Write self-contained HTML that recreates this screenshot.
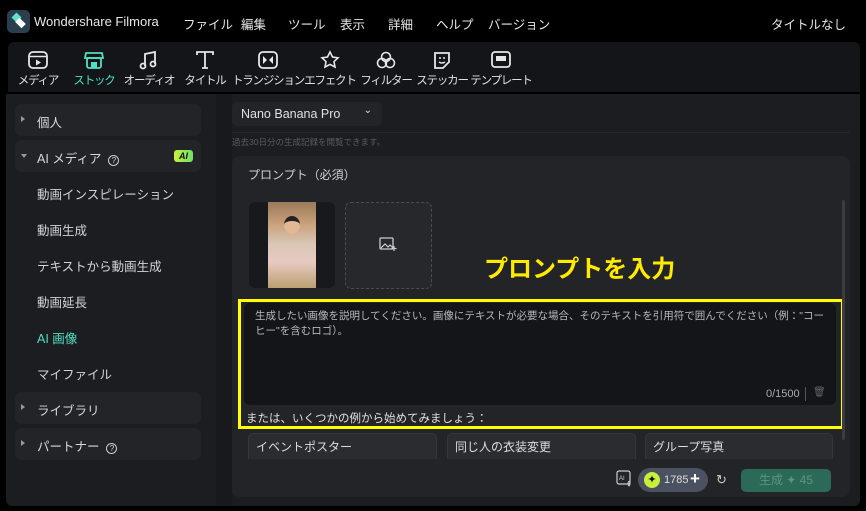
<!DOCTYPE html>
<html><head><meta charset="utf-8"><style>
*{box-sizing:border-box;margin:0;padding:0}
body{width:866px;height:511px;background:#000;font-family:"Liberation Sans","Noto Sans CJK JP",sans-serif;color:#d8d9db;position:relative;overflow:hidden;font-size:12px}
.a{position:absolute;white-space:nowrap}
.menu{top:14px;font-size:12.5px;color:#e6e6e6}
.tb{position:absolute;left:8px;top:42px;width:852px;height:50px;background:#141518;border-radius:6px 6px 0 0}
.ti{position:absolute;top:50px;width:80px;text-align:center;font-size:11.5px;letter-spacing:-1.2px;color:#e0e0e0;white-space:nowrap}
.ti svg{display:block;margin:0 auto 2px}
.panel{position:absolute;left:6px;top:94px;width:854px;height:412px;background:#1b1d21;border-radius:0 0 6px 6px}
.row{position:absolute;left:15px;width:186px;height:32px;background:#222428;border-radius:6px}
.sub{left:37px;font-size:12.5px;color:#d3d4d6}
.tri{position:absolute;left:6px;top:12px;width:0;height:0;border-left:4px solid #999;border-top:3.5px solid transparent;border-bottom:3.5px solid transparent}
</style></head><body>
<div class="a" style="left:7px;top:10px;width:23px;height:23px;background:#2b3e4e;border-radius:5px"></div>
<div class="a" style="left:13px;top:14px;width:7px;height:7px;background:#5fe3d0;transform:rotate(45deg)"></div>
<div class="a" style="left:16px;top:20px;width:9px;height:6px;background:#fff;transform:rotate(45deg)"></div>
<div class="a" style="left:34px;top:14px;font-size:13px;color:#e8e8e8">Wondershare Filmora</div>
<div class="a menu" style="left:183px">ファイル</div>
<div class="a menu" style="left:241px">編集</div>
<div class="a menu" style="left:288px">ツール</div>
<div class="a menu" style="left:340px">表示</div>
<div class="a menu" style="left:388px">詳細</div>
<div class="a menu" style="left:436px">ヘルプ</div>
<div class="a menu" style="left:488px">バージョン</div>
<div class="a menu" style="left:771px">タイトルなし</div>
<div class="tb"></div>
<div class="ti" style="left:-2px"><svg width="22" height="20" viewBox="0 0 22 20"><rect x="2" y="2" width="18" height="16" rx="4" fill="none" stroke="#e6e6e6" stroke-width="1.8"/><line x1="2" y1="6.5" x2="20" y2="6.5" stroke="#e6e6e6" stroke-width="1.5"/><path d="M9 9.5l5 3-5 3z" fill="#e6e6e6"/></svg>メディア</div>
<div class="ti" style="left:54px;color:#4fe0c0"><svg width="22" height="20" viewBox="0 0 22 20"><path d="M3 3h16l1 5H2z" fill="none" stroke="#4fe0c0" stroke-width="1.8"/><rect x="4" y="8" width="14" height="10" rx="2" fill="none" stroke="#4fe0c0" stroke-width="1.8"/><rect x="8" y="12" width="6" height="6" fill="#4fe0c0"/></svg>ストック</div>
<div class="ti" style="left:109px"><svg width="22" height="20" viewBox="0 0 22 20"><path d="M7 16V4l10-2v12" fill="none" stroke="#e6e6e6" stroke-width="1.8"/><circle cx="5" cy="16" r="2.5" fill="none" stroke="#e6e6e6" stroke-width="1.8"/><circle cx="15" cy="14" r="2.5" fill="none" stroke="#e6e6e6" stroke-width="1.8"/></svg>オーディオ</div>
<div class="ti" style="left:165px"><svg width="22" height="20" viewBox="0 0 22 20"><path d="M3 5V2h16v3M11 2v16M8 18h6" fill="none" stroke="#e6e6e6" stroke-width="1.8"/></svg>タイトル</div>
<div class="ti" style="left:228px"><svg width="22" height="20" viewBox="0 0 22 20"><rect x="2" y="2" width="18" height="16" rx="4" fill="none" stroke="#e6e6e6" stroke-width="1.8"/><path d="M6 6l4 4-4 4zM16 6l-4 4 4 4z" fill="#e6e6e6"/></svg>トランジション</div>
<div class="ti" style="left:290px"><svg width="22" height="20" viewBox="0 0 22 20"><path d="M11 2l2.5 5 5.5.8-4 3.8 1 5.4-5-2.6-5 2.6 1-5.4-4-3.8 5.5-.8z" fill="none" stroke="#e6e6e6" stroke-width="1.6"/></svg>エフェクト</div>
<div class="ti" style="left:346px"><svg width="22" height="20" viewBox="0 0 22 20"><circle cx="11" cy="7" r="4.5" fill="none" stroke="#e6e6e6" stroke-width="1.6"/><circle cx="7" cy="13" r="4.5" fill="none" stroke="#e6e6e6" stroke-width="1.6"/><circle cx="15" cy="13" r="4.5" fill="none" stroke="#e6e6e6" stroke-width="1.6"/></svg>フィルター</div>
<div class="ti" style="left:402px"><svg width="22" height="20" viewBox="0 0 22 20"><path d="M4 3h14v9l-6 6H4z" fill="none" stroke="#e6e6e6" stroke-width="1.8"/><circle cx="9" cy="8" r="1" fill="#e6e6e6"/><circle cx="13" cy="8" r="1" fill="#e6e6e6"/><path d="M8 12q3 2 6 0" fill="none" stroke="#e6e6e6" stroke-width="1.4"/></svg>ステッカー</div>
<div class="ti" style="left:461px"><svg width="22" height="20" viewBox="0 0 22 20"><rect x="2" y="2" width="18" height="15" rx="3" fill="none" stroke="#e6e6e6" stroke-width="1.8"/><rect x="6" y="6" width="10" height="5" fill="#e6e6e6"/></svg>テンプレート</div>
<div class="panel"></div>
<div class="a" style="left:216px;top:94px;width:16px;height:412px;background:#17191c"></div>
<div class="row" style="top:104px"><div class="tri"></div><div class="a" style="left:22px;top:8px;font-size:12.5px">個人</div></div>
<div class="row" style="top:140px"><div class="tri" style="border-left:3.5px solid transparent;border-right:3.5px solid transparent;border-top:4px solid #999;border-bottom:0;top:14px"></div><div class="a" style="left:22px;top:8px;font-size:12.5px">AI メディア &nbsp;<span style="display:inline-block;width:11px;height:11px;border:1px solid #ccc;border-radius:50%;font-size:8px;text-align:center;line-height:10px">?</span></div><div class="a" style="left:159px;top:10px;width:19px;height:12px;background:linear-gradient(90deg,#c8f03a,#6fe06a);border-radius:3px;color:#111;font-size:9px;font-weight:bold;font-style:italic;text-align:center;line-height:12px">AI</div></div>
<div class="a sub" style="top:184px">動画インスピレーション</div>
<div class="a sub" style="top:220px">動画生成</div>
<div class="a sub" style="top:256px">テキストから動画生成</div>
<div class="a sub" style="top:292px">動画延長</div>
<div class="a sub" style="top:328px;color:#4fe0c0">AI 画像</div>
<div class="a sub" style="top:364px">マイファイル</div>
<div class="row" style="top:392px"><div class="tri"></div><div class="a" style="left:22px;top:8px;font-size:12.5px">ライブラリ</div></div>
<div class="row" style="top:428px"><div class="tri"></div><div class="a" style="left:22px;top:8px;font-size:12.5px">パートナー &nbsp;<span style="display:inline-block;width:11px;height:11px;border:1px solid #ccc;border-radius:50%;font-size:8px;text-align:center;line-height:10px">?</span></div></div>
<div class="a" style="left:232px;top:102px;width:150px;height:24px;background:#222428;border-radius:5px;font-size:12.5px;padding:5px 9px;color:#e0e0e0">Nano Banana Pro<span style="position:absolute;right:10px;top:3px;font-size:10px">⌄</span></div>
<div class="a" style="left:232px;top:132px;width:618px;border-top:1px solid #25272b"></div>
<div class="a" style="left:232px;top:136px;font-size:8.5px;color:#5a5c60">過去30日分の生成記録を閲覧できます。</div>
<div class="a" style="left:232px;top:156px;width:618px;height:341px;background:#222428;border-radius:8px"></div>
<div class="a" style="left:248px;top:166px;font-size:12px;color:#d0d0d0">プロンプト（必須）</div>
<div class="a" style="left:249px;top:202px;width:86px;height:86px;background:#17191c;border-radius:6px;overflow:hidden"><div style="position:absolute;left:19px;top:0;width:48px;height:86px;background:linear-gradient(180deg,#9a7a5a 0%,#c9a07a 25%,#d9c8b8 50%,#e8c9c0 70%,#b8a070 100%)"><div style="position:absolute;left:16px;top:14px;width:16px;height:18px;border-radius:50%;background:#e3b895;border-top:5px solid #222"></div></div></div>
<div class="a" style="left:345px;top:202px;width:87px;height:87px;border:1.5px dashed #4a4c50;border-radius:6px;background:#26282c"></div>
<svg class="a" style="left:379px;top:236px" width="18" height="16" viewBox="0 0 18 16"><rect x="1" y="2" width="13" height="11" rx="1" fill="none" stroke="#ccc" stroke-width="1.3"/><path d="M2 12l4-4 3 3 2-2 3 3" fill="none" stroke="#ccc" stroke-width="1.2"/><path d="M15 10v5M12.5 12.5h5" stroke="#ccc" stroke-width="1.2"/></svg>
<div class="a" style="left:484px;top:249px;font-size:24px;font-weight:bold;color:#ffea00">プロンプトを入力</div>
<div class="a" style="left:244px;top:303px;width:592px;height:102px;background:#141518;border-radius:6px"></div>
<div class="a" style="left:255px;top:309px;width:570px;white-space:normal;font-size:10.5px;line-height:15px;color:#b8b9bb">生成したい画像を説明してください。画像にテキストが必要な場合、そのテキストを引用符で囲んでください（例："コー ヒー"を含むロゴ）。</div>
<div class="a" style="left:766px;top:388px;font-size:11px;color:#aaa">0/1500</div>
<div class="a" style="left:805px;top:387px;height:14px;border-left:1px solid #555"></div>
<div class="a" style="left:813px;top:387px;font-size:10px;color:#666">🗑</div>
<div class="a" style="left:246px;top:410px;font-size:11.5px;color:#e0e0e0">または、いくつかの例から始めてみましょう：</div>
<div class="a" style="left:238px;top:299px;width:606px;height:130px;border:3px solid #ffff00"></div>
<div class="a" style="left:248px;top:433px;width:189px;height:26px;background:#2a2c30;border:1px solid #35373b;border-bottom:0;border-radius:5px 5px 0 0;padding:4px 7px;font-size:12px;color:#ddd">イベントポスター</div>
<div class="a" style="left:447px;top:433px;width:189px;height:26px;background:#2a2c30;border:1px solid #35373b;border-bottom:0;border-radius:5px 5px 0 0;padding:4px 7px;font-size:12px;color:#ddd">同じ人の衣装変更</div>
<div class="a" style="left:645px;top:433px;width:188px;height:26px;background:#2a2c30;border:1px solid #35373b;border-bottom:0;border-radius:5px 5px 0 0;padding:4px 7px;font-size:12px;color:#ddd">グループ写真</div>
<div class="a" style="left:842px;top:200px;width:3px;height:240px;background:#3a3c40;border-radius:2px"></div>
<svg class="a" style="left:616px;top:470px" width="18" height="18" viewBox="0 0 18 18"><rect x="1" y="1" width="13" height="13" rx="2" fill="none" stroke="#ccc" stroke-width="1.2"/><text x="3" y="10" font-size="6" fill="#ccc" font-family="Liberation Sans">AI</text><path d="M13 11q2 3 0 5q-2-2 0-5" fill="none" stroke="#ccc"/></svg>
<div class="a" style="left:638px;top:468px;width:70px;height:24px;background:#4a5160;border-radius:12px"></div>
<div class="a" style="left:644px;top:472px;width:16px;height:16px;background:#c6f03a;border-radius:50%;color:#111;font-size:11px;text-align:center;line-height:16px">✦</div>
<div class="a" style="left:664px;top:474px;font-size:11px;color:#ddd">1785</div>
<div class="a" style="left:690px;top:469px;font-size:17px;color:#fff;font-weight:bold">+</div>
<div class="a" style="left:716px;top:472px;font-size:13px;color:#ccc">↻</div>
<div class="a" style="left:741px;top:469px;width:90px;height:23px;background:#2c6a58;border-radius:5px;font-size:12px;color:#5b9582;text-align:center;line-height:23px">生成 ✦ 45</div>
</body></html>
